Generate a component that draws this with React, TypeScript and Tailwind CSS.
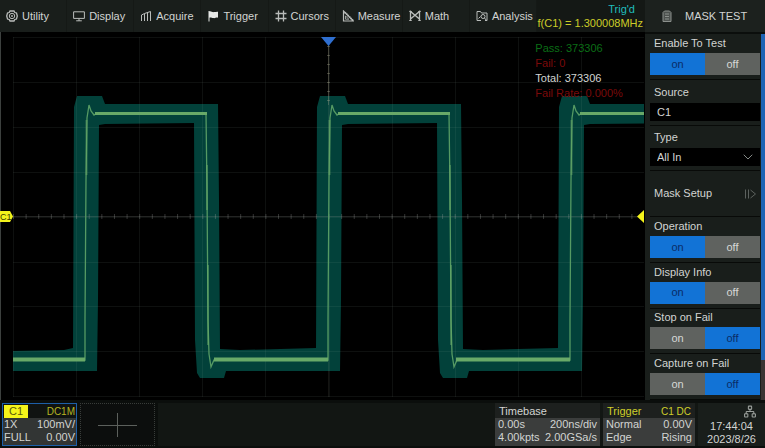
import React, { useState } from "react"
import { ChevronDown, Network } from "lucide-react"

interface IMenuItem {
  name: string;
  icon: React.ReactNode;
}

interface IToggle {
  label: string;
  initial: boolean;
}

const Icon: React.FC<{ children: React.ReactNode }> = ({ children }) => (
  <svg viewBox="0 0 12 12" className="size-3 shrink-0 text-[#b9bcba]" fill="none" stroke="currentColor" aria-hidden="true">
    {children}
  </svg>
)

const menuItems: IMenuItem[] = [
  { name: "Utility", icon: <Icon><path d="M4 1h4l.8 1.500L10.500 3l.8 3-.8 3-1.700.5L8 11H4l-.8-1.500L1.500 9 .7 6l.8-3 1.700-.5z" strokeWidth="1.3" /><circle cx="6" cy="6" r="2.700" /><circle cx="6" cy="6" r=".6" /></Icon> },
  { name: "Display", icon: <Icon><path d="M.6 1.8h10.800v6.600H.6zM6 8.400v2.400M3.200 10.800h5.600" /></Icon> },
  { name: "Acquire", icon: <Icon><path d="M1.500 11V5l3-1.500V11M4.500 3.500L10.500 1.500V11M7.500 11V2.500" /></Icon> },
  { name: "Trigger", icon: <Icon><path d="M2 1v10.500" stroke="#e6e8e6" /><path d="M2 1.500c2-1 3 1 5 .6 1.500 0 2.500-.6 4-.4v6c-2-.4-2.500.6-4.500.4-2-.2-2.500-1-4.500-.4z" fill="#e6e8e6" stroke="none" /></Icon> },
  { name: "Cursors", icon: <Icon><path d="M3.500.5v11M8.500.5v11M.5 3.500h11M.5 8.500h11" strokeWidth="1.300" /></Icon> },
  { name: "Measure", icon: <Icon><path d="M1.500 1v10H11.500z" strokeWidth="1.200" /><path d="M3.500 6v3.200H6.800z" strokeWidth=".8" /><path d="M3 2.500l8 8" strokeDasharray="1 1" strokeWidth="2" /></Icon> },
  { name: "Math", icon: <Icon><path d="M1.500 11V1.500L10.500 9V1.500M10.500 11V1.500L1.500 9" strokeWidth="1.300" /><path d="M.3 1.500h2.400M9.300 1.500h2.400M.3 10.500h2.400M9.300 10.500h2.400" /></Icon> },
  { name: "Analysis", icon: <Icon><path d="M5 10.500H1V1.500h3.500l1 1.500H11v7.500H9" /><circle cx="7" cy="6.500" r="2" /><path d="M8.500 8l2.500 3M2.500 8.500l2-2" /></Icon> },
]

// Rising edge positions, relative to the first one
const PERIODS = [0, 243, 485]

const upperEdge = [[73, 348], [74, 107], [77, 96], [102, 96], [105, 104], [218, 104], [219, 200], [220, 349], [240, 350]]
const lowerEdge = [[97, 371], [98, 300], [99, 125], [105, 124], [194, 123], [195, 340], [197, 373], [200, 378], [224, 378], [226, 371]]
const signal = [[85, 360], [85, 320], [86, 180], [87, 118], [89, 105], [91, 111], [94, 115], [97, 113], [206, 113], [207, 190], [208, 320], [209, 354], [211, 367], [214, 360]]

const repeat = (points: number[][]) =>
  PERIODS.flatMap((dx) => points.map(([x, y]) => [x + dx, y]))

const toPoints = (points: number[][]) => points.map((p) => p.join(",")).join(" ")

const maskPoints = toPoints([[13, 351], [64, 350], ...repeat(upperEdge), ...repeat(lowerEdge).reverse(), [13, 371]])
const signalPoints = toPoints([[13, 360], ...repeat(signal)])

const columns = Array.from({ length: 11 }, (_, i) => 13 + Math.round(i * 63.1))
const rows = Array.from({ length: 9 }, (_, i) => 37 + Math.round(i * 44.9))

const Plot = () => (
  <svg viewBox="0 32 645 368" className="block h-auto w-full bg-black" role="img" aria-label="Channel 1 waveform and mask">
    <defs>
      <clipPath id="screen">
        <rect x="13" y="37" width="631" height="360" />
      </clipPath>
    </defs>
    <path d="M.5 32v368" stroke="#3c403e" />
    <g clipPath="url(#screen)">
      <polygon points={maskPoints} fill="#02413a" />
      {columns.map((x) => <path key={x} d={`M${x + 0.5} 37v360`} stroke="#9fb5aa" strokeOpacity=".09" />)}
      {rows.map((y) => <path key={y} d={`M13 ${y + 0.5}h631`} stroke="#9fb5aa" strokeOpacity=".09" />)}
      <path d="M13 216.500h631" stroke="#8a8f8c" strokeOpacity=".25" />
      <path d="M13 216.500h631" stroke="#a5aaa7" strokeOpacity=".3" strokeWidth="5" strokeDasharray="1 11.620" />
      <path d="M328.500 37v68" stroke="#a8a890" strokeOpacity=".4" />
      <path d="M328.500 105v292" stroke="#a8a890" strokeOpacity=".12" />
      <path d="M328.500 37v68" stroke="#a8a890" strokeOpacity=".35" strokeWidth="3" strokeDasharray="1 8" />
      <polyline points={signalPoints} fill="none" stroke="#559a63" strokeWidth="1.300" />
      {PERIODS.map((dx) => (
        <g key={dx} stroke="#68a968">
          <path d={`M${95 + dx} 113.500h112`} strokeWidth="3" />
          <path d={`M${dx ? dx - 29 : 13} 359.500H${85 + dx}`} strokeWidth="4" />
          <path d={`M${86.5 + dx} 120v55`} strokeWidth="2" strokeOpacity=".5" />
          <path d={`M${207 + dx} 165v45M${208 + dx} 265v80`} strokeWidth="2" strokeOpacity=".5" />
        </g>
      ))}
    </g>
    <path d="M321 37h15l-7.500 9z" fill="#2f6fd0" />
    <path d="M644 210v13l-7-6.500z" fill="#f4f41a" />
    <path d="M0 211h10l3 5.500-3 5.500H0z" fill="#f2f21c" />
    <text x="0" y="220" fontSize="9" fill="#3a3a00">C1</text>
  </svg>
)

const toggles: IToggle[] = [
  { label: "Operation", initial: true },
  { label: "Display Info", initial: true },
  { label: "Stop on Fail", initial: false },
  { label: "Capture on Fail", initial: false },
]

const rowClass = "flex flex-col justify-end border-b border-[#080a08] pb-1"

const ToggleRow: React.FC<IToggle> = ({ label, initial }) => {
  const [on, setOn] = useState(initial)
  const active = "flex-1 bg-[#1273d6] text-[#0a2c66]"
  const idle = "flex-1 bg-[#5f625f] text-[#d6d8d6]"

  return (
    <div role="group" aria-label={label} className={`${rowClass} gap-1`}>
      <span className="pl-1 leading-3">{label}</span>
      <div className="flex h-[22px]">
        <button type="button" aria-pressed={on} onClick={() => setOn(true)} className={on ? active : idle}>on</button>
        <button type="button" aria-pressed={!on} onClick={() => setOn(false)} className={on ? idle : active}>off</button>
      </div>
    </div>
  )
}

const MaskPanel = () => (
  <aside className="flex w-[120px] shrink-0 flex-col bg-[#191e1b]">
    <header className="flex h-8 items-center gap-3 bg-[#1c211e] pl-4">
      <svg viewBox="0 0 12 12" className="size-3 shrink-0 text-[#8b908c]" fill="none" stroke="currentColor" aria-hidden="true">
        <path d="M3.500 1h5l1.500 1.500V11.500H2V2.500z" fill="#4d524f" />
        <path d="M4 4h4M4 6.500h4M4 9h4" />
      </svg>
      <h1>MASK TEST</h1>
    </header>
    <div className="flex flex-1 border-t-2 border-[#0b0e0c]">
      <div className="grid min-w-0 flex-1 auto-rows-fr pr-px pl-[5px]">
        <ToggleRow label="Enable To Test" initial={true} />
        <div className={`${rowClass} gap-[5px]`}>
          <label htmlFor="source" className="pl-1 leading-3">Source</label>
          <input id="source" defaultValue="C1" className="h-[18px] w-full bg-black px-[7px]" />
        </div>
        <div className={`${rowClass} gap-[5px]`}>
          <label htmlFor="type" className="pl-1 leading-3">Type</label>
          <div className="relative">
            <select id="type" className="block h-[18px] w-full appearance-none bg-black px-[7px]">
              <option>All In</option>
              <option>All Out</option>
              <option>Any In</option>
              <option>Any Out</option>
            </select>
            <ChevronDown className="pointer-events-none absolute top-px right-1 size-4 text-[#858a87]" strokeWidth={1.5} />
          </div>
        </div>
        <button type="button" className="flex items-center justify-between border-b border-[#080a08] px-1">
          Mask Setup
          <svg viewBox="0 0 12 12" className="size-3 text-[#5c615e]" fill="none" stroke="currentColor" aria-hidden="true">
            <path d="M1.500 1.500v9M4.500 1.500v9M6.500 2l5 4-5 4" />
          </svg>
        </button>
        {toggles.map((toggle) => <ToggleRow key={toggle.label} {...toggle} />)}
      </div>
      <div className="w-1 bg-[#3a3634]">
        <div className="h-[89%] bg-[#1f63b4]" />
      </div>
    </div>
  </aside>
)

const StatusBar = () => (
  <footer className="flex h-12 gap-[3px] bg-[#0b0e0c] pt-[3px] pb-0.5 leading-[13px]">
    <section className="ml-0.5 flex w-[75px] flex-col border border-[#1d5fa8] bg-[#323534]">
      <div className="flex items-center justify-between bg-[#101311] px-px pt-px text-[#b5b522]">
        <span className="w-6 bg-[#f4f41a] text-center text-[#5a5a08]">C1</span>
        <span className="text-[10px]">DC1M</span>
      </div>
      <div className="flex justify-between px-px"><span>1X</span><span>100mV/</span></div>
      <div className="flex justify-between px-px"><span>FULL</span><span>0.00V</span></div>
    </section>
    <button type="button" aria-label="Add channel" className="flex w-[75px] items-center justify-center border border-dotted border-[#383c39] bg-[#0c0e0d]">
      <svg viewBox="0 0 40 24" className="h-6 w-10" stroke="#5c605c" aria-hidden="true">
        <path d="M0 12.500h39M19.500 0v24" />
      </svg>
    </button>
    <div className="flex flex-1 justify-end gap-[3px] bg-[#121613]">
      <section className="flex w-[105px] flex-col bg-[#3b3d3c]">
        <div className="bg-[#1d201e] px-1 pt-0.5">Timebase</div>
        <div className="flex justify-between px-[3px]"><span>0.00s</span><span>200ns/div</span></div>
        <div className="flex justify-between px-[3px]"><span>4.00kpts</span><span>2.00GSa/s</span></div>
      </section>
      <section className="flex w-[92px] flex-col bg-[#3b3d3c]">
        <div className="flex justify-between bg-[#1d201e] px-1 pt-0.5 text-[#cfcf2a]">
          <span>Trigger</span>
          <span className="text-[10px]">C1 DC</span>
        </div>
        <div className="flex justify-between px-[3px]"><span>Normal</span><span>0.00V</span></div>
        <div className="flex justify-between px-[3px]"><span>Edge</span><span>Rising</span></div>
      </section>
      <section className="flex w-[67px] flex-col items-center bg-[#191e1b] pt-0.5">
        <Network className="mr-2 size-3.5 self-end text-[#9a9f9b]" strokeWidth={2} />
        <time className="pt-0.5">17:44:04</time>
        <span>2023/8/26</span>
      </section>
    </div>
  </footer>
)

const App: React.FC = () => {
  return (
    <div className="flex min-h-screen flex-col bg-black font-['Liberation_Sans',Arial,sans-serif] text-[11px] text-[#d2d4d2]">
      <main className="flex flex-1">
        <div className="flex min-w-0 flex-1 flex-col">
          <div className="flex h-8 bg-[#191e1b]">
            <nav className="flex min-w-0 flex-1">
              {menuItems.map(({ name, icon }) => (
                <button key={name} type="button" className="flex min-w-0 flex-1 basis-0 items-center gap-1 border-r border-[#151916] pl-1.5">
                  {icon}
                  {name}
                </button>
              ))}
            </nav>
            <div className="flex w-[108px] shrink-0 flex-col bg-[#141815] pt-0.5 pr-0.5 text-right leading-[14px] whitespace-nowrap">
              <span className="pr-2 text-[#20bdbd]">Trig'd</span>
              <span className="text-[#cccc28]">f(C1) = 1.300008MHz</span>
            </div>
          </div>
          <div className="relative">
            <Plot />
            <div className="absolute top-[9px] left-[83%] leading-[15px]">
              <p className="text-[#0b6e16]">Pass: 373306</p>
              <p className="text-[#7a0a0a]">Fail: 0</p>
              <p>Total: 373306</p>
              <p className="text-[#7a0a0a]">Fail Rate: 0.000%</p>
            </div>
          </div>
        </div>
        <MaskPanel />
      </main>
      <StatusBar />
    </div>
  )
}

export default App
